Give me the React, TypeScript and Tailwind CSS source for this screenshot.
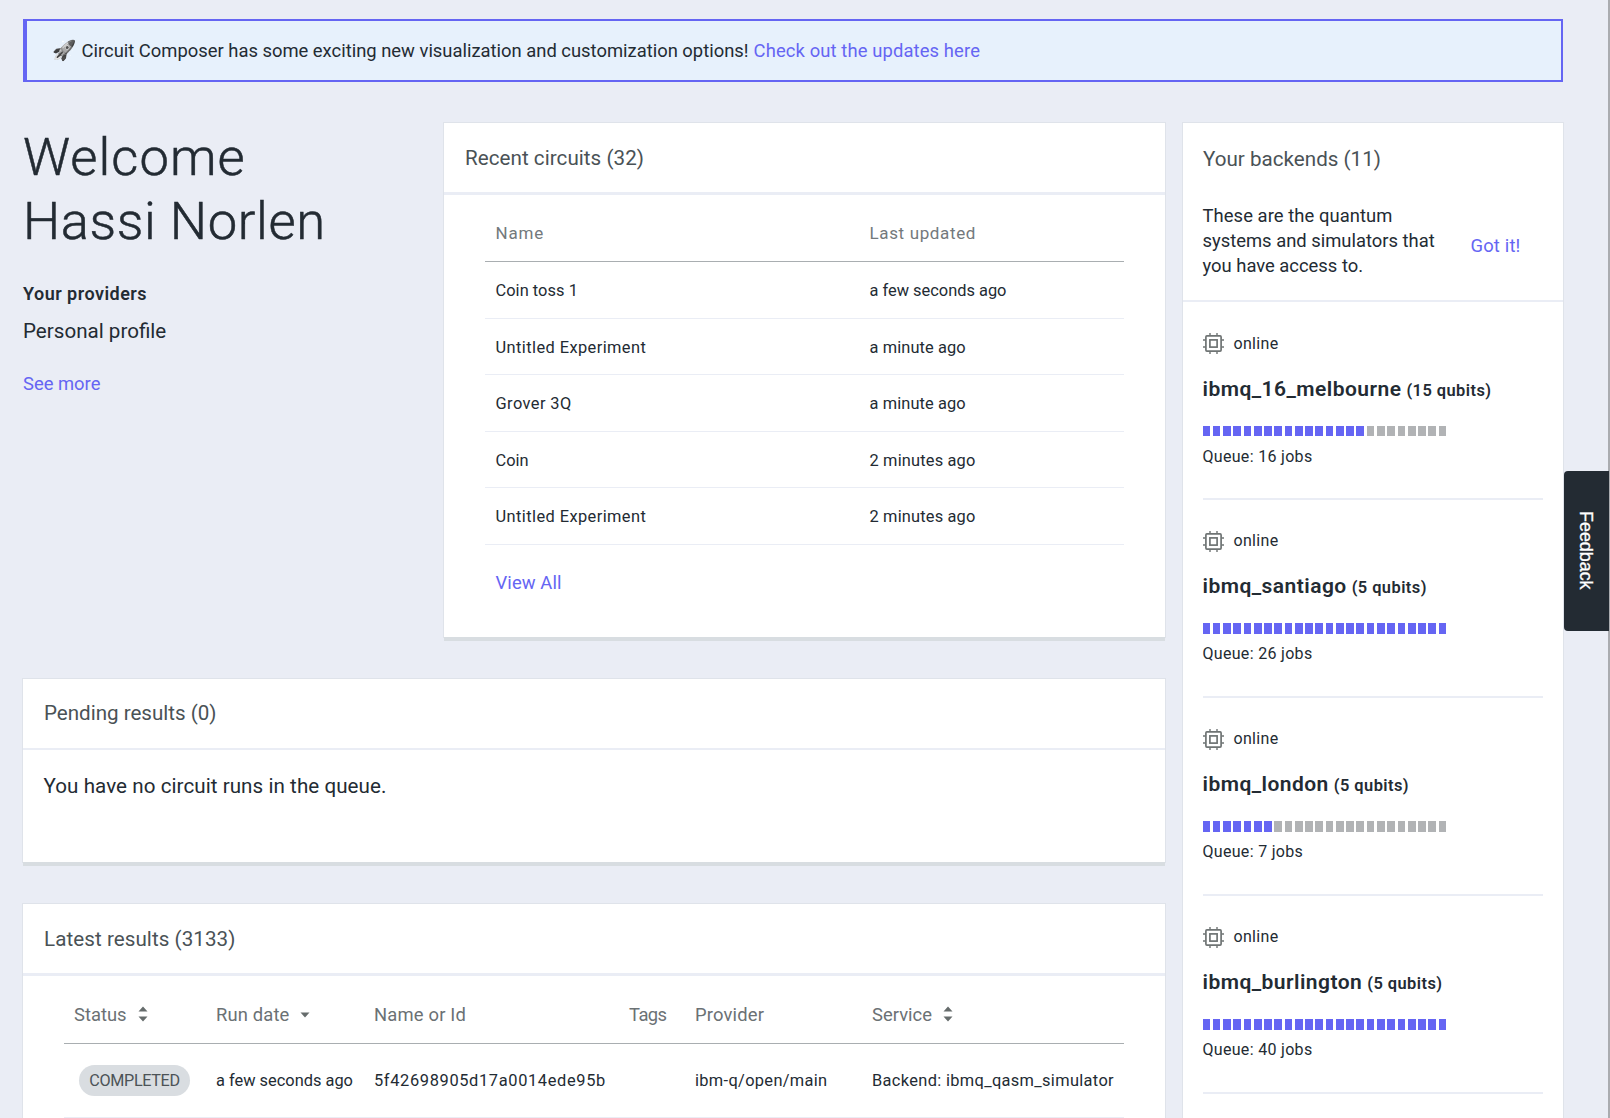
import type { ReactNode } from 'react';

const recent = [
  { name: 'Coin toss 1', nameClass: 'tracking-[0.05px]', when: 'a few seconds ago', whenClass: '' },
  { name: 'Untitled Experiment', nameClass: 'tracking-[0.42px]', when: 'a minute ago', whenClass: 'tracking-[0.1px]' },
  { name: 'Grover 3Q', nameClass: 'tracking-[0.42px]', when: 'a minute ago', whenClass: 'tracking-[0.1px]' },
  { name: 'Coin', nameClass: '', when: '2 minutes ago', whenClass: 'tracking-[0.17px]' },
  { name: 'Untitled Experiment', nameClass: 'tracking-[0.42px]', when: '2 minutes ago', whenClass: 'tracking-[0.17px]' },
];

const backends = [
  { name: 'ibmq_16_melbourne', qubits: 15, jobs: 16, filled: 16 },
  { name: 'ibmq_santiago', qubits: 5, jobs: 26, filled: 24 },
  { name: 'ibmq_london', qubits: 5, jobs: 7, filled: 7 },
  { name: 'ibmq_burlington', qubits: 5, jobs: 40, filled: 24 },
];

function ChipIcon() {
  return (
    <svg width="21" height="21" viewBox="0 0 21 21" fill="none" stroke="#6f7474" strokeWidth="1.7" className="shrink-0">
      <rect x="2.9" y="2.9" width="15.2" height="15.2" rx="1" />
      <rect x="6.9" y="6.9" width="7.2" height="7.2" />
      <path d="M7 0v2.6M14 0v2.6M7 18.4V21M14 18.4V21M0 7h2.6M0 14h2.6M18.4 7H21M18.4 14H21" strokeWidth="1.4" />
    </svg>
  );
}

function SortIcon() {
  return (
    <svg width="10" height="16" viewBox="0 0 10 16" fill="#666c6c">
      <path d="M5 0.5 9.5 5.5H0.5zM5 15.5 0.5 10.5h9z" />
    </svg>
  );
}

function CardTitle({ className, children }: { className: string; children: ReactNode }) {
  return <h2 className={`px-[21px] text-[20.6px] leading-7 whitespace-nowrap text-[#4a5256] ${className}`}>{children}</h2>;
}

const card = 'bg-white shadow-[0_4px_0_#d8dde1,0_0_0_1px_#dfe3ea]';

export default function App() {
  return (
    <div className="relative flex h-[1118px] w-[1610px] overflow-hidden bg-[#eaedf5] font-[Roboto,sans-serif] text-[#232b33]">
      <div className="flex w-[1586px] flex-col pt-[19px] pr-6 pl-[23px]">
        <div className="flex h-[63px] w-[1540px] shrink-0 items-center border-2 border-l-4 border-[#6565f3] bg-[#e7f1fc] pl-[25px] text-[18.4px] whitespace-nowrap">
          <span className="w-[29.5px] text-[19.5px] leading-6 grayscale">🚀</span>
          <span>Circuit Composer has some exciting new visualization and customization options!</span>
          <a className="ml-[5px] tracking-[0.12px] text-[#6565f3]">Check out the updates here</a>
        </div>

        <div className="mt-[41px] flex gap-[17.5px]">
          <div className="w-[1142px] shrink-0">
            <div className="flex">
              <div className="w-[421px] shrink-0 whitespace-nowrap">
                <h1 className="pt-[2px] text-[52.5px] leading-[64px] font-light [-webkit-text-stroke:0.5px_#232b33]">
                  <span className="block tracking-[1.05px]">Welcome</span>
                  <span className="block tracking-[0.62px]">Hassi Norlen</span>
                </h1>
                <h3 className="mt-[28.5px] text-[18px] leading-6 font-semibold tracking-[0.48px]">Your providers</h3>
                <p className="mt-[11.5px] text-[20.6px] leading-7">Personal profile</p>
                <a className="mt-[27px] block text-[18.4px] leading-6 text-[#6565f3]">See more</a>
              </div>

              <section className={`h-[514px] w-[721px] ${card}`}>
                <div className="flex h-[72px] items-center border-b-[3px] border-[#eaedf5] pt-px">
                  <CardTitle className="tracking-[0.045px]">Recent circuits (32)</CardTitle>
                </div>
                <div className="ml-[41px] w-[639px]">
                  <div className="flex h-[67px] items-center border-b-[1.5px] border-[#a9aeb1] pt-[12px] pl-[10.5px] text-[17px] text-[#73797c]">
                    <span className="w-[374px] tracking-[0.8px]">Name</span>
                    <span className="tracking-[0.64px]">Last updated</span>
                  </div>
                  {recent.map((row, i) => (
                    <div key={i} className="flex h-[56.6px] items-center border-b border-[#eaedf5] pt-[3px] pl-[10.5px] text-[16.4px]">
                      <span className={`w-[374px] ${row.nameClass}`}>{row.name}</span>
                      <span className={row.whenClass}>{row.when}</span>
                    </div>
                  ))}
                  <a className="mt-[26px] block pl-[10.5px] text-[18.4px] leading-6 tracking-[0.1px] text-[#6565f3]">View All</a>
                </div>
              </section>
            </div>

            <section className={`mt-[41.5px] h-[183.5px] ${card}`}>
              <div className="flex h-[71px] items-center border-b-2 border-[#eaedf5]">
                <CardTitle className="tracking-[-0.02px]">Pending results (0)</CardTitle>
              </div>
              <p className="px-[20.5px] pt-[22px] text-[20.6px] leading-7 tracking-[0.06px]">You have no circuit runs in the queue.</p>
            </section>

            <section className={`mt-[42px] h-[300px] ${card}`}>
              <div className="flex h-[72px] items-center border-b-[3px] border-[#eaedf5]">
                <CardTitle className="tracking-[0.065px]">Latest results (3133)</CardTitle>
              </div>
              <div className="ml-[41px] w-[1060px] whitespace-nowrap">
                <div className="grid h-[68px] grid-cols-[142px_158px_255px_66px_177px_1fr] items-center border-b-[1.5px] border-[#a9aeb1] pt-[10px] pl-[10px] text-[18.4px] text-[#6b7174]">
                  <span className="flex items-center gap-[11px]">Status <SortIcon /></span>
                  <span className="flex items-center gap-[10px] tracking-[0.145px]">
                    Run date
                    <svg width="10" height="6" viewBox="0 0 10 6" fill="#666c6c" className="mt-[2px]"><path d="M0.5 0.5h9L5 5.5z" /></svg>
                  </span>
                  <span className="tracking-[0.18px]">Name or Id</span>
                  <span className="tracking-[-0.57px]">Tags</span>
                  <span className="tracking-[0.16px]">Provider</span>
                  <span className="flex items-center gap-[11px] tracking-[0.02px]">Service <SortIcon /></span>
                </div>
                <div className="grid h-[73.5px] grid-cols-[142px_158px_255px_66px_177px_1fr] items-center border-b border-[#eaedf5] pl-[10px] text-[16.4px]">
                  <span className="ml-[5px] flex h-[31px] w-[111px] items-center justify-center rounded-full bg-[#d9dde1] pt-px text-[16.2px] tracking-[-0.34px] text-[#4c5357]">
                    COMPLETED
                  </span>
                  <span className="pt-[2px]">a few seconds ago</span>
                  <span className="pt-[2px] tracking-[0.65px]">5f42698905d17a0014ede95b</span>
                  <span />
                  <span className="pt-[2px] tracking-[0.33px]">ibm-q/open/main</span>
                  <span className="pt-[2px] tracking-[0.34px]">Backend: ibmq_qasm_simulator</span>
                </div>
              </div>
            </section>
          </div>

          <aside className="h-[1100px] w-[380px] shrink-0 bg-white shadow-[0_0_0_1px_#dfe3ea]">
            <div className="h-[179px] border-b-2 border-[#eaedf5] pt-[21.5px] whitespace-nowrap">
              <CardTitle className="-ml-[0.5px] tracking-[0.016px]">Your backends (11)</CardTitle>
              <div className="mt-[30.5px] flex items-center pl-[20px] text-[18.4px]">
                <p className="w-[268px] leading-[25.2px]">
                  <span className="tracking-[0.07px]">These are the quantum</span>
                  <br />
                  systems and simulators that
                  <br />
                  you have access to.
                </p>
                <a className="pt-[9px] tracking-[0.17px] text-[#6565f3]">Got it!</a>
              </div>
            </div>
            <div className="px-5">
              {backends.map((b) => (
                <div key={b.name} className="h-[197.9px] border-b-[2px] border-[#eaedf5] pt-[29.5px]">
                  <div className="flex h-[24px] items-center gap-[10px] text-[16px] tracking-[0.32px]">
                    <ChipIcon />
                    online
                  </div>
                  <h3 className="mt-[19px] text-[21px] leading-7 font-semibold tracking-[0.46px] whitespace-nowrap">
                    {b.name}
                    <span className="ml-[5px] text-[16.4px] tracking-[0.45px]">({b.qubits} qubits)</span>
                  </h3>
                  <div className="mt-[21px] flex h-[10.5px] gap-[2.58px]">
                    {Array.from({ length: 24 }, (_, i) => (
                      <span key={i} className={`w-[7.7px] ${i < b.filled ? 'bg-[#6565f3]' : 'bg-[#b1b3b5]'}`} />
                    ))}
                  </div>
                  <p className="mt-[8.5px] text-[16px] leading-6 tracking-[0.31px]">Queue: {b.jobs} jobs</p>
                </div>
              ))}
            </div>
          </aside>
        </div>
      </div>

      <div className="absolute top-0 right-0 h-full w-[2px] bg-[#aaacb0]" />
      <button className="absolute top-[470.5px] right-[1.5px] flex h-[160.5px] w-[45px] items-center justify-center rounded-l bg-[#232b33] font-['Liberation_Sans',sans-serif] text-[17.9px] text-white [-webkit-text-stroke:0.3px_white] [writing-mode:vertical-rl]">
        Feedback
      </button>
    </div>
  );
}
